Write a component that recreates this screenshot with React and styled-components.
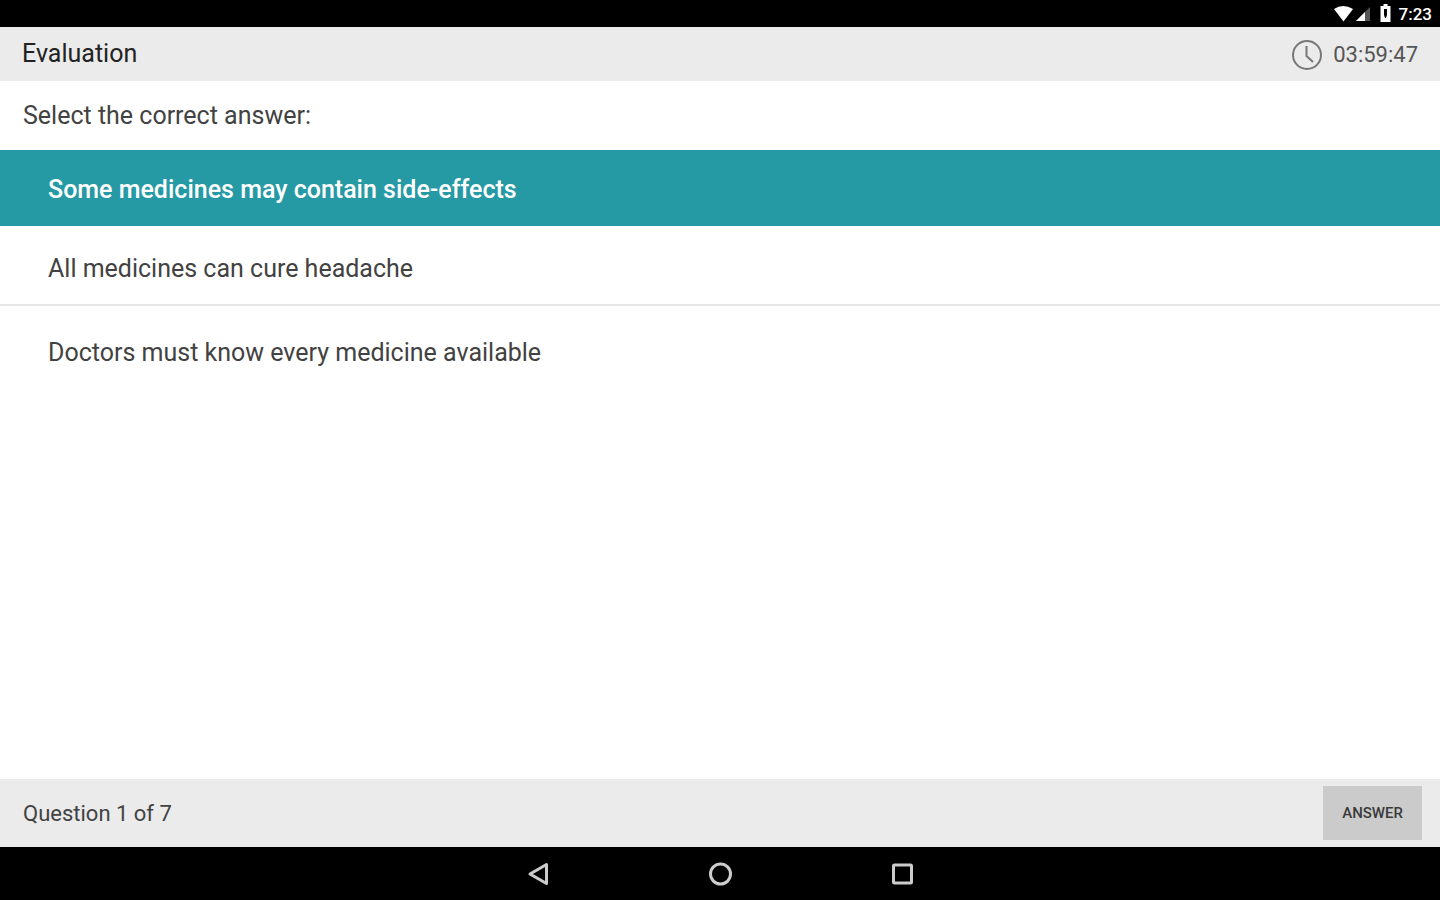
import React, { useState, useEffect } from 'react'
import styled, { createGlobalStyle } from 'styled-components'

const teal = '#269aa4'
const gray = '#ebebeb'
const text = '#424242'

const GlobalStyle = createGlobalStyle`
  body {
    margin: 0;
    background: #fff;
    color: ${text};
    font-family: Roboto, 'Liberation Sans', sans-serif;
    font-size: 25px;
    line-height: 32px;
  }
`
const Screen = styled.div`
  display: flex;
  flex-direction: column;
  min-height: 100vh;
`
const StatusBar = styled.div`
  display: flex;
  align-items: center;
  justify-content: flex-end;
  height: 27px;
  padding-right: 8px;
  background: #000;
  color: #fff;
  font-size: 17px;
  font-weight: 500;
  line-height: 24px;
`
const StatusIcons = styled.svg`
  margin-right: 6px;
`
const Header = styled.header`
  display: flex;
  align-items: center;
  justify-content: space-between;
  height: 54px;
  padding: 0 22px;
  background: ${gray};
`
const Title = styled.h1`
  margin: 0;
  color: #222;
  font-size: 25px;
  font-weight: 400;
`
const Timer = styled.div`
  display: flex;
  align-items: center;
  gap: 11px;
  padding-top: 2px;
  color: #555;
  font-size: 22px;
`
const Form = styled.form`
  display: flex;
  flex: 1;
  flex-direction: column;
`
const Question = styled.fieldset`
  flex: 1;
  min-width: 0;
  margin: 0;
  padding: 0;
  border: 0;
`
const Prompt = styled.legend`
  padding: 19px 23px 18px;
`
const Radio = styled.input`
  position: absolute;
  opacity: 0;
`
const Option = styled.label`
  display: block;
  padding: 24px 48px 20px;
  cursor: pointer;

  & + & {
    padding: 27px 48px 19px;
    border-bottom: 2px solid #e6e6e6;
  }
  & + &:last-child {
    padding: 31px 48px;
    border-bottom: 0;
  }
  &:has(:checked) {
    background: ${teal};
    color: #fff;
    font-weight: 500;
  }
`
const Footer = styled.footer`
  display: flex;
  align-items: center;
  justify-content: space-between;
  height: 68px;
  padding: 0 18px 0 23px;
  background: ${gray};
`
const Progress = styled.div`
  padding-top: 2px;
  font-size: 22px;
`
const Answer = styled.button`
  height: 54px;
  padding: 0 19px;
  border: 0;
  background: #cbcbcb;
  color: #3a3a3a;
  font-family: inherit;
  font-size: 15px;
  font-weight: 500;
  cursor: pointer;
`
const NavBar = styled.nav`
  display: flex;
  justify-content: center;
  gap: 134px;
  height: 53px;
  background: #000;
`
const NavButton = styled.button`
  display: flex;
  align-items: center;
  justify-content: center;
  width: 48px;
  padding: 0;
  border: 0;
  background: none;
  cursor: pointer;
`

const Status = () => (
  <StatusIcons width='60' height='20' viewBox='0 0 60 20'>
    <path d='M1 5Q10 -1 20 5L10.500 17.500Z' fill='#fff' />
    <path d='M37 3V17H23Z' fill='#555' />
    <path d='M32 8V17H23Z' fill='#fff' />
    <path
      d='M50.500 0h4v2h3v16H47.500V2h3ZM51 5v6l1 3h1l1-3V5Z'
      fill='#fff'
      fillRule='evenodd'
    />
  </StatusIcons>
)

const Clock = () => (
  <svg
    width='30'
    height='30'
    viewBox='0 0 30 30'
    fill='none'
    stroke='#777'
    strokeWidth='2'
  >
    <circle cx='15' cy='15' r='14' />
    <path d='M14.500 6V16L21 22' />
  </svg>
)

const shapes = {
  Back: <path d='M4 12L20.500 2.500V21.500Z' />,
  Home: <circle cx='12.500' cy='12' r='10' />,
  Recent: <rect x='3.500' y='3' width='18' height='18' rx='1' />
}

const questionCount = 7
const options = [
  'Some medicines may contain side-effects',
  'All medicines can cure headache',
  'Doctors must know every medicine available'
]

const formatTime = seconds =>
  [Math.floor(seconds / 3600), Math.floor(seconds / 60) % 60, seconds % 60]
    .map(part => String(part).padStart(2, '0'))
    .join(':')

const App = () => {
  const [selected, setSelected] = useState(0)

  useEffect(() => {
    document.title = 'Evaluation'
  }, [])

  return (
    <>
      <GlobalStyle />
      <Screen>
        <StatusBar>
          <Status />
          7:23
        </StatusBar>
        <Header>
          <Title>Evaluation</Title>
          <Timer>
            <Clock />
            {formatTime(14387)}
          </Timer>
        </Header>
        <Form onSubmit={e => e.preventDefault()}>
          <Question>
            <Prompt>Select the correct answer:</Prompt>
            {options.map((option, i) => (
              <Option key={option}>
                <Radio
                  type='radio'
                  name='answer'
                  checked={selected === i}
                  onChange={() => setSelected(i)}
                />
                {option}
              </Option>
            ))}
          </Question>
          <Footer>
            <Progress>Question 1 of {questionCount}</Progress>
            <Answer>ANSWER</Answer>
          </Footer>
        </Form>
        <NavBar>
          {Object.entries(shapes).map(([name, shape]) => (
            <NavButton key={name} aria-label={name}>
              <svg
                width='24'
                height='24'
                viewBox='0 0 24 24'
                fill='none'
                stroke='#ccc'
                strokeWidth='3'
                strokeLinejoin='round'
              >
                {shape}
              </svg>
            </NavButton>
          ))}
        </NavBar>
      </Screen>
    </>
  )
}

export default App
